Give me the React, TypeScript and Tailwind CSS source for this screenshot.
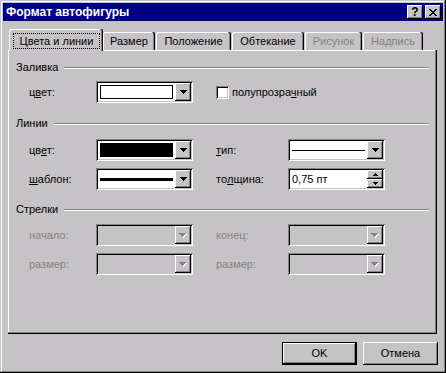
import React from "react";

const raised =
  "shadow-[inset_-1px_-1px_#000,inset_1px_1px_#fff,inset_-2px_-2px_#848284]";
const sunken =
  "shadow-[inset_1px_1px_#848284,inset_-1px_-1px_#fff,inset_2px_2px_#000,inset_-2px_-2px_#c6c3c6]";

function Tri() {
  return (
    <svg width="7" height="4" viewBox="0 0 7 4" shapeRendering="crispEdges">
      <path d="M0 0h7v1H0zM1 1h5v1H1zM2 2h3v1H2zM3 3h1v1H3z" fill="#000" />
    </svg>
  );
}

function DisTri() {
  return (
    <svg width="8" height="5" viewBox="0 0 8 5" shapeRendering="crispEdges">
      <path d="M1 1h7v1H1zM2 2h5v1H2zM3 3h3v1H3zM4 4h1v1H4z" fill="#fff" />
      <path d="M0 0h7v1H0zM1 1h5v1H1zM2 2h3v1H2zM3 3h1v1H3z" fill="#848284" />
    </svg>
  );
}

function DropBtn({ disabled = false }: { disabled?: boolean }) {
  return (
    <div className={`w-[16px] self-stretch flex items-center justify-center bg-[#c6c3c6] ${raised}`}>
      {disabled ? <DisTri /> : <Tri />}
    </div>
  );
}

function Combo({ children, disabled = false }: { children?: React.ReactNode; disabled?: boolean }) {
  return (
    <div className={`w-[97px] h-[22px] p-[2px] flex ${sunken}`}>
      <div className={`flex-1 flex items-center ${disabled ? "" : "bg-white"}`}>{children}</div>
      <DropBtn disabled={disabled} />
    </div>
  );
}

function Spin() {
  return (
    <div className={`w-[97px] h-[22px] p-[2px] flex ${sunken}`}>
      <div className="flex-1 flex items-center bg-white pl-[2px]">0,75 пт</div>
      <div className="w-[16px] flex flex-col bg-white">
        <div className={`h-[9px] flex items-center justify-center bg-[#c6c3c6] ${raised}`}>
          <svg width="5" height="3" viewBox="0 0 5 3" shapeRendering="crispEdges">
            <path d="M2 0h1v1H2zM1 1h3v1H1zM0 2h5v1H0z" fill="#000" />
          </svg>
        </div>
        <div className={`h-[9px] flex items-center justify-center bg-[#c6c3c6] ${raised}`}>
          <svg width="5" height="3" viewBox="0 0 5 3" shapeRendering="crispEdges">
            <path d="M0 0h5v1H0zM1 1h3v1H1zM2 2h1v1H2z" fill="#000" />
          </svg>
        </div>
      </div>
    </div>
  );
}

function Header({ text }: { text: string }) {
  return (
    <div className="flex items-center h-[13px] pl-[8px] pr-[8px]">
      <span>{text}</span>
      <div className="flex-1 ml-[6px] h-[2px] border-t border-t-[#848284] border-b border-b-white" />
    </div>
  );
}

function Row({
  l1,
  c1,
  l2,
  c2,
  mt,
}: {
  l1: React.ReactNode;
  c1: React.ReactNode;
  l2: React.ReactNode;
  c2: React.ReactNode;
  mt: string;
}) {
  return (
    <div className={`flex items-center h-[22px] pl-[21px] ${mt}`}>
      <div className="w-[67px]">{l1}</div>
      {c1}
      <div className="w-[23px]" />
      <div className="w-[72px] flex items-center">{l2}</div>
      {c2}
    </div>
  );
}

function Tab({ label, w, disabled = false, ml = "ml-[1px]" }: { label: string; w: string; disabled?: boolean; ml?: string }) {
  return (
    <div
      className={`${w} ${ml} h-[18px] flex items-center justify-center rounded-t-[2px] shadow-[inset_-1px_0_#000,inset_-2px_0_#848284,inset_1px_1px_#fff] ${
        disabled ? "text-[#848284]" : ""
      }`}
    >
      {label}
    </div>
  );
}

function CloseGlyph() {
  return (
    <svg width="8" height="7" viewBox="0 0 8 7" shapeRendering="crispEdges">
      <path
        d="M0 0h2v1H0zM6 0h2v1H6zM1 1h2v1H1zM5 1h2v1H5zM2 2h4v1H2zM3 3h2v1H3zM2 4h4v1H2zM1 5h2v1H1zM5 5h2v1H5zM0 6h2v1H0zM6 6h2v1H6z"
        fill="#000"
      />
    </svg>
  );
}

export default function App() {
  return (
    <div className="w-[446px] h-[373px] bg-[#c6c3c6] p-[3px] flex flex-col shadow-[inset_-1px_-1px_#000,inset_1px_1px_#c6c3c6,inset_-2px_-2px_#848284,inset_2px_2px_#fff] font-['Liberation_Sans',Arial,sans-serif] text-[11px] leading-[13px] text-black select-none">
      {/* Title bar */}
      <div className="h-[18px] bg-[#000084] flex items-center justify-between pl-[3px] pr-[2px]">
        <span className="text-white font-bold text-[12px] leading-[14px]">Формат автофигуры</span>
        <div className="flex gap-[2px]">
          <div className={`w-[16px] h-[14px] bg-[#c6c3c6] flex items-center justify-center pb-[1px] font-bold text-[12px] leading-[12px] ${raised}`}>
            ?
          </div>
          <div className={`w-[16px] h-[14px] bg-[#c6c3c6] flex items-center justify-center ${raised}`}>
            <CloseGlyph />
          </div>
        </div>
      </div>

      {/* Tabs */}
      <div className="mt-[8px] h-[21px] flex items-end ml-[6px] relative z-10">
        <div className="w-[94px] h-[22px] -mb-[1px] bg-[#c6c3c6] rounded-t-[2px] shadow-[inset_-1px_0_#000,inset_-2px_0_#848284,inset_1px_1px_#fff] flex items-start pt-[4px] pl-[4px]">
          <div className="w-[87px] h-[16px] border border-dotted border-black flex items-center justify-center">
            Цвета и линии
          </div>
        </div>
        <Tab label="Размер" w="w-[52px]" ml="ml-0" />
        <Tab label="Положение" w="w-[75px]" />
        <Tab label="Обтекание" w="w-[72px]" />
        <Tab label="Рисунок" w="w-[57px]" disabled />
        <Tab label="Надпись" w="w-[60px]" disabled />
      </div>

      {/* Panel */}
      <div className="ml-[5px] w-[429px] h-[284px] pt-[11px] shadow-[inset_-1px_-1px_#000,inset_-2px_-2px_#848284,inset_1px_1px_#fff] flex flex-col">
        <Header text="Заливка" />
        <div className="flex items-center h-[22px] pl-[21px] mt-[7px]">
          <div className="w-[67px]">
            ц<u>в</u>ет:
          </div>
          <Combo>
            <div className="mx-[2px] flex-1 h-[14px] border border-black bg-white" />
          </Combo>
          <div className="w-[23px]" />
          <div className={`w-[13px] h-[13px] bg-white ${sunken}`} />
          <span className="ml-[3px]">
            полупрозра<u>ч</u>ный
          </span>
        </div>

        <div className="mt-[14px]">
          <Header text="Линии" />
        </div>
        <Row
          mt="mt-[9px]"
          l1={
            <>
              цв<u>е</u>т:
            </>
          }
          c1={
            <Combo>
              <div className="mx-[2px] flex-1 h-[14px] border border-black bg-black" />
            </Combo>
          }
          l2={
            <>
              <u>т</u>ип:
            </>
          }
          c2={
            <Combo>
              <div className="mx-[2px] flex-1 h-[1px] bg-black" />
            </Combo>
          }
        />
        <Row
          mt="mt-[7px]"
          l1={
            <>
              <u>ш</u>аблон:
            </>
          }
          c1={
            <Combo>
              <div className="mx-[2px] flex-1 h-[3px] bg-black" />
            </Combo>
          }
          l2={
            <>
              то<u>л</u>щина:
            </>
          }
          c2={<Spin />}
        />

        <div className="mt-[13px]">
          <Header text="Стрелки" />
        </div>
        <Row
          mt="mt-[8px]"
          l1={<span className="text-[#848284]">начало:</span>}
          c1={<Combo disabled />}
          l2={<span className="text-[#848284]">конец:</span>}
          c2={<Combo disabled />}
        />
        <Row
          mt="mt-[7px]"
          l1={<span className="text-[#848284]">размер:</span>}
          c1={<Combo disabled />}
          l2={<span className="text-[#848284]">размер:</span>}
          c2={<Combo disabled />}
        />
      </div>

      {/* Buttons */}
      <div className="mt-[8px] flex justify-end gap-[6px] mr-[5px]">
        <div className="w-[75px] h-[23px] border border-black bg-[#c6c3c6] flex">
          <div className={`flex-1 flex items-center justify-center ${raised}`}>OK</div>
        </div>
        <div className={`w-[75px] h-[23px] bg-[#c6c3c6] flex items-center justify-center ${raised}`}>Отмена</div>
      </div>
    </div>
  );
}
